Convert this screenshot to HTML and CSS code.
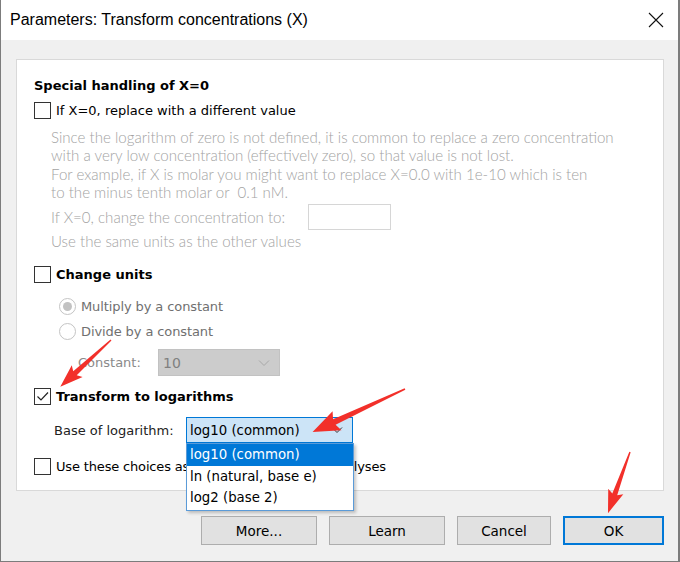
FILE: index.html
```html
<!DOCTYPE html>
<html>
<head>
<meta charset="utf-8">
<link rel="stylesheet" href="styles.css">
</head>
<body>
<div class="window">
  <div class="titlebar">
    <span class="title">Parameters: Transform concentrations (X)</span>
    <svg class="close" width="16" height="16" viewBox="0 0 16 16"><path d="M1 1 L15 15 M15 1 L1 15" stroke="#111" stroke-width="1.1" fill="none"/></svg>
  </div>
  <div class="client">
    <div class="panel">
      <div class="heading">Special handling of X=0</div>
      <div class="row row-replace"><span class="box"></span><span class="label">If X=0, replace with a different value</span></div>
      <div class="note">
        <p>Since the logarithm of zero is not defined, it is common to replace a zero concentration<br>with a very low concentration (effectively zero), so that value is not lost.</p>
        <p class="p2">For example, if X is molar you might want to replace X=0.0 with 1e-10 which is ten<br>to the minus tenth molar or&nbsp; 0.1 nM.</p>
        <div class="note-row"><span class="note-label">If X=0, change the concentration to:</span><span class="input"></span></div>
        <p class="p3">Use the same units as the other values</p>
      </div>
      <div class="row row-units"><span class="box"></span><span class="label bold">Change units</span></div>
      <div class="radio-row r1"><span class="radio on"></span><span class="rlabel">Multiply by a constant</span></div>
      <div class="radio-row r2"><span class="radio"></span><span class="rlabel">Divide by a constant</span></div>
      <div class="const-row"><span class="const-label">Constant:</span><span class="select disabled"><span>10</span><svg class="chev" width="12" height="8" viewBox="0 0 12 8"><path d="M1 1.5 L6 6.5 L11 1.5" stroke="#a8a8a8" stroke-width="1" fill="none"/></svg></span></div>
      <div class="row row-log"><span class="box checked"><svg width="15" height="15" viewBox="0 0 15 15"><path d="M2.5 7.5 L6 11 L13 3.5" stroke="#222" stroke-width="1.2" fill="none"/></svg></span><span class="label bold">Transform to logarithms</span></div>
      <div class="base-row">
        <span class="base-label">Base of logarithm:</span>
        <span class="select active"><span>log10 (common)</span><svg class="chev" width="12" height="8" viewBox="0 0 12 8"><path d="M1 1.5 L6 6.5 L11 1.5" stroke="#333" stroke-width="1" fill="none"/></svg>
          <span class="list">
            <span class="item sel">log10 (common)</span>
            <span class="item">ln (natural, base e)</span>
            <span class="item">log2 (base 2)</span>
          </span>
        </span>
      </div>
      <div class="row row-default"><span class="box"></span><span class="label tight">Use these choices as the default for future analyses</span></div>
    </div>
    <div class="buttons">
      <span class="btn w116">More...</span>
      <span class="btn w116">Learn</span>
      <span class="btn w94">Cancel</span>
      <span class="btn w101 default">OK</span>
    </div>
  </div>
  <svg class="arrows" width="680" height="562" viewBox="0 0 680 562">
    <g fill="#f2302a">
      <polygon transform="translate(111,340) rotate(137.3)" points="0,-0.7 49,-2.6 46,-8 69,0 46,8 49,2.6 0,0.7"/>
      <polygon transform="translate(405,389) rotate(155)" points="0,-0.8 78,-3 75,-10.5 102,0 75,10.5 78,3 0,0.8"/>
      <polygon transform="translate(630,452) rotate(109.8)" points="0,-0.7 45,-2.6 42,-8 65,0 42,8 45,2.6 0,0.7"/>
    </g>
  </svg>
</div>
</body>
</html>
```

FILE: styles.css
```css
html, body { margin: 0; padding: 0; }
body { width: 680px; height: 562px; overflow: hidden; background: #f0f0f0; }

.window {
  position: relative;
  width: 680px;
  height: 562px;
  box-sizing: border-box;
  border-left: 1px solid #7c7c7c;
  border-right: 2px solid #7c7c7c;
  border-bottom: 1px solid #7c7c7c;
  display: flex;
  flex-direction: column;
  font-family: "DejaVu Sans", sans-serif;
  color: #000;
}

.titlebar {
  height: 40px;
  flex: none;
  background: #fff;
  display: flex;
  align-items: center;
  padding-left: 9px;
  padding-right: 14px;
}
.title {
  font-family: "Liberation Sans", Arial, sans-serif;
  font-size: 16px;
  color: #000;
  flex: 1;
}
.close { flex: none; }

.client {
  flex: 1;
  background: #f0f0f0;
  padding: 19px 14px 0 15px;
}

.panel {
  height: 432px;
  box-sizing: border-box;
  background: #fff;
  border: 1px solid #d9d9d9;
  padding-left: 17px;
  display: flex;
  flex-direction: column;
}

.heading {
  margin-top: 16px;
  height: 20px;
  line-height: 20px;
  font-weight: bold;
  font-size: 13px;
}

.row {
  display: flex;
  align-items: center;
  height: 21px;
}
.row-replace { margin-top: 4px; }
.row-units { margin-top: 14px; height: 20px; }
.row-log { margin-top: 10px; height: 20px; }
.row-default { margin-top: 13px; height: 20px; }

.box {
  width: 17px;
  height: 17px;
  box-sizing: border-box;
  border: 1px solid #333;
  background: #fff;
  flex: none;
  margin-right: 5px;
  display: flex;
  align-items: center;
  justify-content: center;
}
.label { font-size: 13px; white-space: nowrap; }
.label.tight { letter-spacing: -0.16px; }
.bold { font-weight: bold; }

.note {
  margin-left: 17px;
  margin-top: 7px;
  color: #a3a3a3;
  font-family: "Lato", sans-serif;
  font-weight: 300;
  font-size: 15.1px;
}
.note p { margin: 0; line-height: 18px; white-space: nowrap; }
.note .p2 { margin-top: 1px; }
.note-row {
  margin-top: 3px;
  height: 26px;
  display: flex;
  align-items: center;
}
.note-label { width: 257px; white-space: nowrap; }
.input {
  width: 83px;
  height: 26px;
  box-sizing: border-box;
  border: 1px solid #d6d6d6;
  background: #fff;
}
.note .p3 { margin-top: 2px; }

.radio-row {
  display: flex;
  align-items: center;
  height: 19px;
  margin-left: 25px;
}
.radio-row.r1 { margin-top: 13px; }
.radio-row.r2 { margin-top: 6px; }
.radio {
  width: 17px;
  height: 17px;
  box-sizing: border-box;
  border: 1px solid #c4c4c4;
  border-radius: 50%;
  background: #fff;
  margin-right: 5px;
  display: flex;
  align-items: center;
  justify-content: center;
}
.radio.on::after {
  content: "";
  width: 9px;
  height: 9px;
  border-radius: 50%;
  background: #c2c2c2;
}
.rlabel { font-size: 13px; color: #707070; white-space: nowrap; letter-spacing: -0.1px; }

.const-row {
  margin-top: 8px;
  height: 27px;
  display: flex;
  align-items: center;
  margin-left: 44px;
}
.const-label { width: 80px; font-size: 13px; color: #8a8a8a; }

.select {
  position: relative;
  box-sizing: border-box;
  display: flex;
  align-items: center;
  justify-content: space-between;
  padding: 0 9px 0 4px;
}
.select.disabled {
  width: 122px;
  height: 27px;
  background: #cccccc;
  border: 1px solid #c2c2c2;
  color: #808080;
  font-size: 14px;
}
.select.active {
  width: 167px;
  height: 26px;
  background: #cce4f7;
  border: 1px solid #0078d7;
  font-size: 13.3px;
  color: #000;
  padding-left: 3px;
}

.base-row {
  margin-top: 11px;
  height: 26px;
  display: flex;
  align-items: center;
  margin-left: 20px;
}
.base-label { width: 132px; font-size: 13px; color: #222; white-space: nowrap; }

.list {
  position: absolute;
  left: -1px;
  top: 25px;
  width: 168px;
  box-sizing: border-box;
  background: #fff;
  border: 1px solid #5b9bd8;
  padding-bottom: 2px;
  box-shadow: 2px 2px 3px rgba(0,0,0,0.22);
  display: flex;
  flex-direction: column;
  z-index: 2;
}
.item {
  height: 21px;
  line-height: 21px;
  padding-left: 3px;
  font-size: 13.3px;
  color: #000;
  white-space: nowrap;
}
.item.sel { height: 22px; line-height: 22px; background: #0078d7; color: #fff; }

.buttons {
  margin-top: 25px;
  display: flex;
  justify-content: flex-end;
  gap: 12px;
}
.btn {
  height: 29px;
  box-sizing: border-box;
  background: #e1e1e1;
  border: 1px solid #adadad;
  display: flex;
  align-items: center;
  justify-content: center;
  font-size: 13.5px;
  color: #000;
}
.btn.default { border: 2px solid #0078d7; }
.w116 { width: 116px; }
.w94 { width: 94px; }
.w101 { width: 101px; }

.arrows {
  position: absolute;
  left: -1px;
  top: 0;
  pointer-events: none;
  z-index: 5;
}
```
